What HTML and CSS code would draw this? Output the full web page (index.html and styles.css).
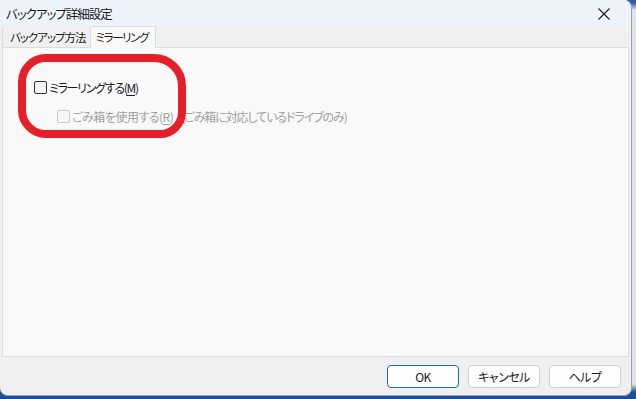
FILE: index.html
```html
<!DOCTYPE html>
<html lang="ja">
<head>
    <meta charset="UTF-8">
    <title>バックアップ詳細設定</title>
    <link rel="stylesheet" href="styles.css">
</head>
<body>
    <div class="window">
        <div class="titlebar">
            <span class="title">バックアップ詳細設定</span>
            <svg class="close" width="12" height="12" viewBox="0 0 12 12">
                <path d="M0.5 0.5 L11.5 11.5 M11.5 0.5 L0.5 11.5" stroke="#1b1b1b" stroke-width="1.1" fill="none"/>
            </svg>
        </div>
        <div class="tabs">
            <div class="tab">バックアップ方法</div>
            <div class="tab active">ミラーリング</div>
        </div>
        <div class="panel">
            <label class="check-row">
                <span class="box"></span>
                <span class="label-main">ミラーリングする(<u>M</u>)</span>
            </label>
            <label class="check-row sub disabled">
                <span class="box"></span>
                <span class="label-sub">ごみ箱を使用する(<u>R</u>)</span>
                <span class="note">(ごみ箱に対応しているドライブのみ)</span>
            </label>
            <div class="marker"></div>
        </div>
        <div class="footer">
            <button class="default">OK</button>
            <button>キャンセル</button>
            <button>ヘルプ</button>
        </div>
    </div>
</body>
</html>
```

FILE: styles.css
```css
body {
    margin: 0;
    width: 636px;
    height: 399px;
    overflow: hidden;
    background: linear-gradient(to bottom, #2a5db0 0, #2a5db0 3px, #dfe5ec 10px, #dfe5ec 384px, #1e4c9a 392px);
    font-family: "Noto Sans CJK JP", "Noto Sans", sans-serif;
    font-size: 12px;
    font-feature-settings: "palt";
    color: #1a1a1a;
}
.window {
    width: 631px;
    height: 395px;
    display: flex;
    flex-direction: column;
    background: #f0f0f0;
    border-right: 1px solid #9aa3ad;
    border-bottom: 1px solid #9aa3ad;
    border-radius: 0 8px 8px 8px;
    overflow: hidden;
}
.titlebar {
    height: 26px;
    flex-shrink: 0;
    display: flex;
    align-items: center;
    justify-content: space-between;
    padding: 0 21px 0 6px;
    background: #eef3f9;
}
.title {
    font-size: 12.5px;
    letter-spacing: -1px;
    padding-top: 1px;
}
.close {
    margin-top: 2px;
}
.tabs {
    height: 21px;
    flex-shrink: 0;
    display: flex;
    align-items: flex-end;
    padding-left: 2px;
    position: relative;
    z-index: 1;
}
.tab {
    height: 19px;
    line-height: 19px;
    padding: 0 4px 0 7px;
    border-left: 1px solid #dcdcdc;
    background: #f0f0f0;
    font-size: 11.5px;
    letter-spacing: -1px;
}
.tab.active {
    height: 21px;
    line-height: 20px;
    background: #f9f9f9;
    border: 1px solid #dcdcdc;
    border-bottom: none;
    margin-bottom: -1px;
    padding: 0 7px 0 5px;
    letter-spacing: -1.4px;
}
.panel {
    flex: 1;
    margin: 0 2px;
    background: #f9f9f9;
    border: 1px solid #dcdcdc;
    padding: 33px 0 0 31px;
    display: flex;
    flex-direction: column;
    gap: 16px;
    position: relative;
}
.check-row {
    display: flex;
    align-items: center;
    gap: 2px;
    height: 13px;
    line-height: 13px;
    white-space: nowrap;
}
.check-row u {
    text-decoration-thickness: 1px;
    text-underline-offset: 2px;
}
.label-main {
    letter-spacing: -1.3px;
}
.label-sub {
    letter-spacing: -0.5px;
}
.box {
    width: 11px;
    height: 11px;
    border: 1px solid #333;
    border-radius: 2px;
    background: #f3f3f3;
    flex-shrink: 0;
}
.sub {
    margin-left: 23px;
}
.disabled {
    color: #a0a0a0;
}
.disabled .box {
    border-color: #c8c8c8;
    background: #f7f7f7;
}
.note {
    margin-left: 6px;
    letter-spacing: -1.1px;
}
.marker {
    position: absolute;
    left: 15px;
    top: 6px;
    width: 152px;
    height: 68px;
    border: 8px solid #e5202a;
    border-radius: 28px 32px 26px 28px;
}
.footer {
    height: 38px;
    flex-shrink: 0;
    display: flex;
    justify-content: flex-end;
    align-items: flex-start;
    gap: 9px;
    padding: 8px 10px 0 0;
    box-sizing: border-box;
}
button {
    width: 72px;
    height: 23px;
    border: 1px solid #d0d0d0;
    border-radius: 4px;
    background: #fdfdfd;
    font-family: inherit;
    font-size: 12px;
    font-feature-settings: "palt";
    letter-spacing: -0.5px;
    color: #1a1a1a;
    padding: 0;
}
button.default {
    border-color: #1b6cb8;
}
```
